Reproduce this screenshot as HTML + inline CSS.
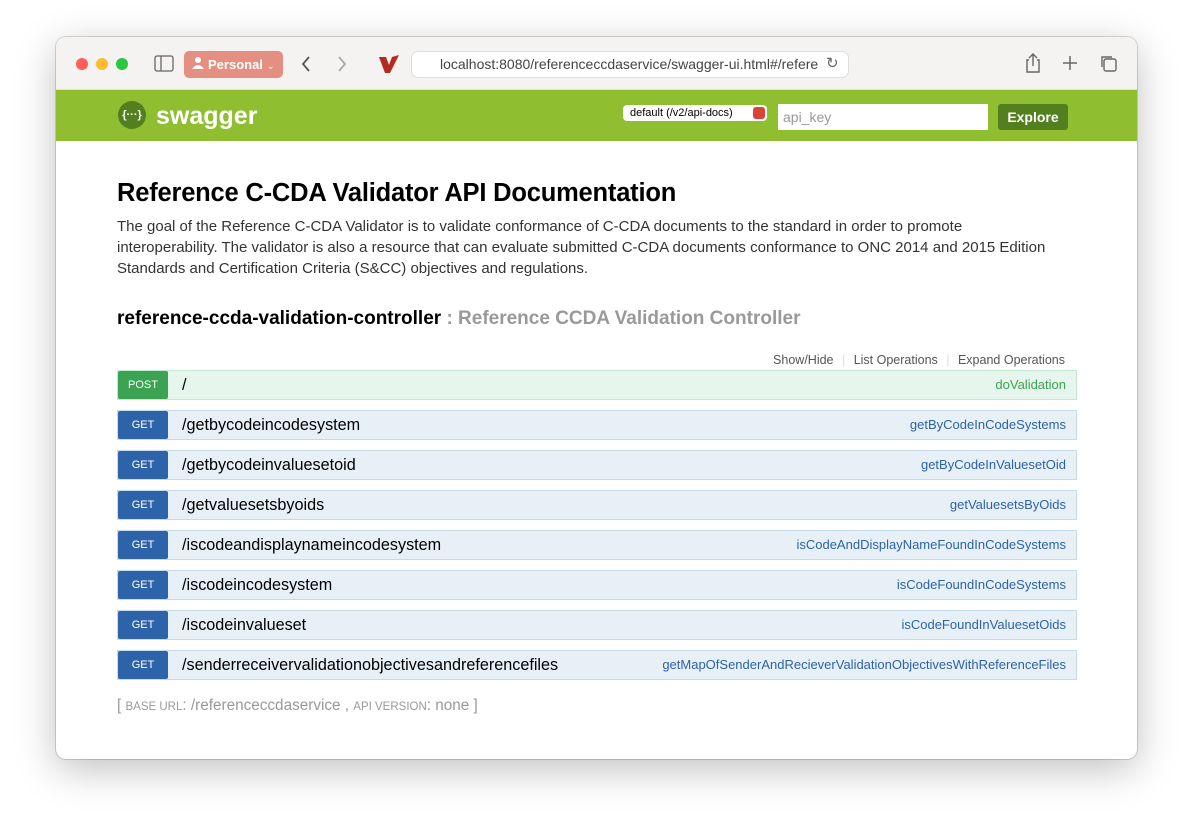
<!DOCTYPE html>
<html><head><meta charset="utf-8"><style>
*{box-sizing:border-box;margin:0;padding:0}
body{width:1193px;height:834px;background:#fff;font-family:"Liberation Sans",sans-serif;position:relative;overflow:hidden}
.win{position:absolute;left:56px;top:37px;width:1081px;height:722px;border-radius:10px;background:#fff;box-shadow:0 10px 40px rgba(0,0,0,.25),0 0 0 1px rgba(0,0,0,.15);overflow:hidden}
.tb{position:absolute;left:0;top:0;width:100%;height:53px;background:#f4f3f2;border-bottom:1px solid #ddd}
.dot{position:absolute;top:21px;width:12px;height:12px;border-radius:50%}
.hdr{position:absolute;left:0;top:53px;width:100%;height:51px;background:#8fbe31}
.abs{position:absolute}
.row{position:absolute;left:61px;width:960px;height:30px;border:1px solid #c3d9ec;background:#e7f0f7}
.row .m{position:absolute;left:0;top:0;width:50px;height:28px;background:#2d63a9;color:#fff;font-size:11px;text-align:center;line-height:28px;border-radius:2px}
.row .p{position:absolute;left:64px;top:0;line-height:28px;font-size:16.2px;color:#000}
.row .n{position:absolute;right:10px;top:0;line-height:28px;font-size:13px;color:#2d63a9}
</style></head><body>
<div class="win">
<div class="tb">
<div class="dot" style="left:20px;background:#fe5f57"></div>
<div class="dot" style="left:40px;background:#febc2e"></div>
<div class="dot" style="left:60px;background:#28c840"></div>
<svg class="abs" style="left:98px;top:18px" width="20" height="17"><rect x="1" y="1" width="18" height="15" rx="2" fill="none" stroke="#666" stroke-width="1.3"/><line x1="7" y1="1" x2="7" y2="16" stroke="#666" stroke-width="1.3"/></svg>
<div class="abs" style="left:128px;top:14px;width:99px;height:27px;background:#e48f82;border-radius:5px;color:#fff;font-size:13px;font-weight:bold;line-height:27px;padding-left:24px">Personal <span style="font-weight:normal;font-size:10px;opacity:.8">&#8964;</span></div>
<svg class="abs" style="left:136px;top:19px" width="12" height="14"><circle cx="6" cy="4" r="3" fill="#fff"/><path d="M0 13 Q6 5 12 13Z" fill="#fff"/></svg>
<svg class="abs" style="left:244px;top:18px" width="12" height="18"><path d="M9 2 L3 9 L9 16" fill="none" stroke="#555" stroke-width="1.8"/></svg>
<svg class="abs" style="left:280px;top:18px" width="12" height="18"><path d="M3 2 L9 9 L3 16" fill="none" stroke="#aaa" stroke-width="1.8"/></svg>
<svg class="abs" style="left:322px;top:17px" width="22" height="20"><path d="M1 3 L8 3 L11 11 L14 3 L21 1 L12 19 L7 19Z" fill="#b52a22"/></svg>
<div class="abs" style="left:355px;top:14px;width:438px;height:27px;background:#fff;border:1px solid #ddd;border-radius:7px;font-size:14px;color:#444;line-height:25px;padding-left:28px;white-space:nowrap;overflow:hidden">localhost:8080/referenceccdaservice/swagger-ui.html#/refere</div>
<div class="abs" style="left:770px;top:17px;font-size:15px;color:#666">&#8635;</div>
<svg class="abs" style="left:968px;top:15px" width="18" height="22"><path d="M5 8 H3 V20 H15 V8 H13 M9 14 V2 M5 6 L9 2 L13 6" fill="none" stroke="#666" stroke-width="1.4"/></svg>
<svg class="abs" style="left:1006px;top:18px" width="16" height="16"><path d="M8 1V15M1 8H15" stroke="#666" stroke-width="1.5"/></svg>
<svg class="abs" style="left:1043px;top:17px" width="18" height="18"><rect x="5" y="5" width="12" height="12" rx="2" fill="none" stroke="#666" stroke-width="1.4"/><path d="M3 13V3H13" fill="none" stroke="#666" stroke-width="1.4"/></svg>
</div>
<div class="hdr">
<div class="abs" style="left:62px;top:11px;width:28px;height:28px;border-radius:50%;background:#547f1f;color:#fff;font-size:11px;text-align:center;line-height:28px;font-weight:bold">{&#183;&#183;&#183;}</div>
<div class="abs" style="left:100px;top:11px;color:#fff;font-size:25px;font-weight:bold;line-height:30px">swagger</div>
<div class="abs" style="left:567px;top:15px;width:144px;height:16px;background:#fff;border-radius:4px;font-size:11px;line-height:16px;padding-left:7px">default (/v2/api-docs)<span style="position:absolute;right:2px;top:2px;width:12px;height:12px;background:#d9433a;border-radius:3px"></span></div>
<div class="abs" style="left:722px;top:14px;width:210px;height:26px;background:#fff;font-size:14px;color:#999;line-height:26px;padding-left:5px">api_key</div>
<div class="abs" style="left:942px;top:14px;width:70px;height:26px;background:#547f1f;border-radius:3px;color:#fff;font-size:14px;font-weight:bold;text-align:center;line-height:26px">Explore</div>
</div>
<div class="abs" style="left:61px;top:142px;font-size:25.5px;font-weight:bold;color:#000;letter-spacing:-.2px">Reference C-CDA Validator API Documentation</div>
<div class="abs" style="left:61px;top:179px;font-size:15px;line-height:21px;color:#333;white-space:nowrap">The goal of the Reference C-CDA Validator is to validate conformance of C-CDA documents to the standard in order to promote<br>interoperability. The validator is also a resource that can evaluate submitted C-CDA documents conformance to ONC 2014 and 2015 Edition<br>Standards and Certification Criteria (S&amp;CC) objectives and regulations.</div>
<div class="abs" style="left:61px;top:271px;font-size:19px;font-weight:bold;color:#000;white-space:nowrap">reference-ccda-validation-controller <span style="color:#999">: Reference CCDA Validation Controller</span></div>
<div class="abs" style="right:72px;top:316px;font-size:12.5px;color:#555;white-space:nowrap">Show/Hide <span style="color:#ddd;margin:0 5px">|</span> List Operations <span style="color:#ddd;margin:0 5px">|</span> Expand Operations</div>
<div class="row" style="top:333px;background:#e7f6ec;border-color:#c3e8d1"><div class="m" style="background:#3aa452">POST</div><div class="p">/</div><div class="n" style="color:#3aa452">doValidation</div></div>
<div class="row" style="top:373px"><div class="m">GET</div><div class="p">/getbycodeincodesystem</div><div class="n">getByCodeInCodeSystems</div></div>
<div class="row" style="top:413px"><div class="m">GET</div><div class="p">/getbycodeinvaluesetoid</div><div class="n">getByCodeInValuesetOid</div></div>
<div class="row" style="top:453px"><div class="m">GET</div><div class="p">/getvaluesetsbyoids</div><div class="n">getValuesetsByOids</div></div>
<div class="row" style="top:493px"><div class="m">GET</div><div class="p">/iscodeandisplaynameincodesystem</div><div class="n">isCodeAndDisplayNameFoundInCodeSystems</div></div>
<div class="row" style="top:533px"><div class="m">GET</div><div class="p">/iscodeincodesystem</div><div class="n">isCodeFoundInCodeSystems</div></div>
<div class="row" style="top:573px"><div class="m">GET</div><div class="p">/iscodeinvalueset</div><div class="n">isCodeFoundInValuesetOids</div></div>
<div class="row" style="top:613px"><div class="m">GET</div><div class="p">/senderreceivervalidationobjectivesandreferencefiles</div><div class="n">getMapOfSenderAndRecieverValidationObjectivesWithReferenceFiles</div></div>
<div class="abs" style="left:61px;top:660px;font-size:15.3px;color:#999;white-space:nowrap">[ <span style="font-size:11.5px">BASE URL</span>: /referenceccdaservice , <span style="font-size:11.5px">API VERSION</span>: none ]</div>
</div>
</body></html>
